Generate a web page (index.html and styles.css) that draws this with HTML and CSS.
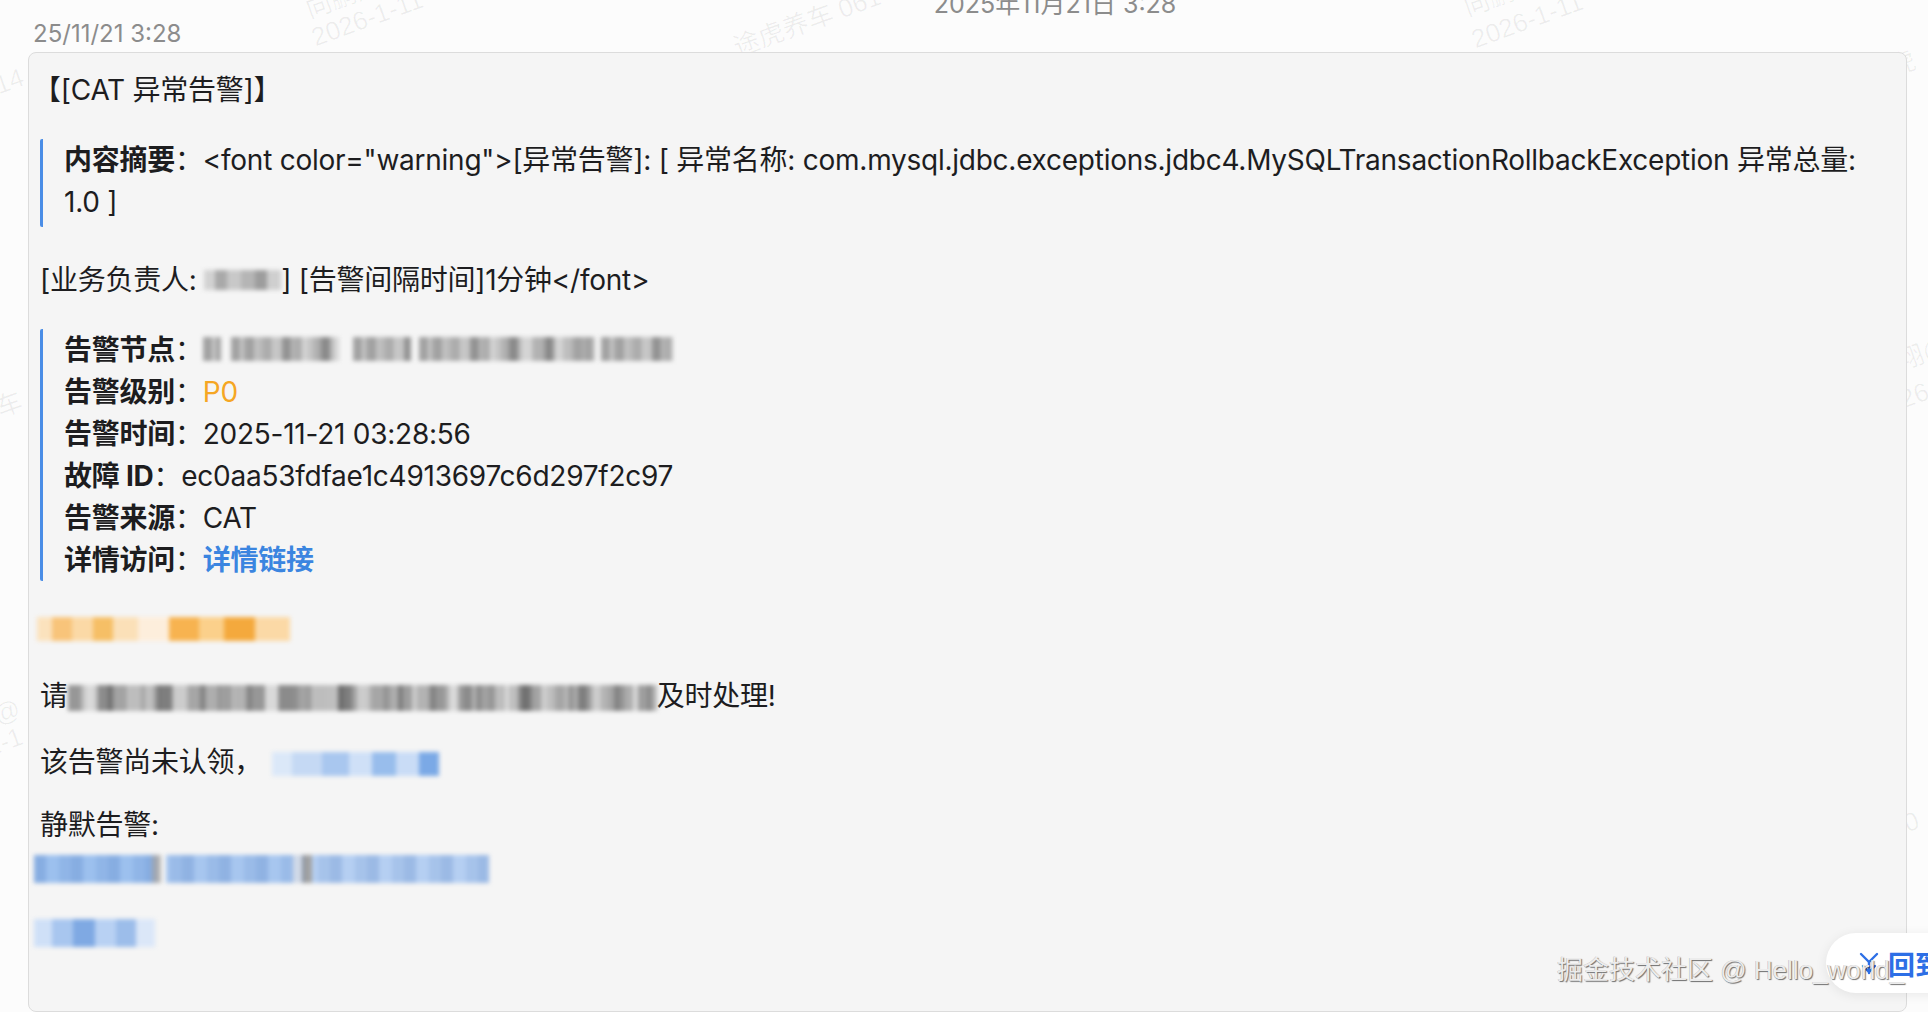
FILE: index.html
```html
<!DOCTYPE html>
<html lang="zh-CN">
<head>
<meta charset="utf-8">
<title>CAT 异常告警</title>
<link rel="stylesheet" href="styles.css">
</head>
<body>
<div class="page">
  <div class="wm-layer" aria-hidden="true">
    <span class="wm wm1">向鹏翔@途虎养车 0614</span>
    <span class="wm wm2">2026-1-11</span>
    <span class="wm wm3">途虎养车 0614</span>
    <span class="wm wm4">向鹏翔@途虎养车</span>
    <span class="wm wm5">2026-1-11</span>
    <span class="wm wm6">0614</span>
    <span class="wm wm7">养车</span>
    <span class="wm wm8">@</span>
    <span class="wm wm9">1-1</span>
    <span class="wm wm10">翔@</span>
    <span class="wm wm11">26</span>
    <span class="wm wm12">0</span>
    <span class="wm wm13">虎</span>
  </div>

  <div class="top-date">2025年11月21日 3:28</div>
  <div class="meta">25/11/21 3:28</div>

  <div class="card">
    <div class="line title"><span class="halt">【</span>[CAT 异常告警]<span class="halt">】</span></div>

    <div class="quote q1">
      <b>内容摘要</b>：&lt;font color="warning"&gt;[异常告警]: [ 异常名称: com.mysql.jdbc.exceptions.jdbc4.MySQLTransactionRollbackException 异常总量: 1.0 ]
    </div>

    <div class="line gap-32">[业务负责人: <span class="mz mz-owner"></span>] [告警间隔时间]1分钟&lt;/font&gt;</div>

    <div class="quote q2">
      <div class="line"><b>告警节点</b>：<span class="mz mz-node mz-n1"></span><span class="mz mz-node mz-n2"></span><span class="mz mz-node mz-n3"></span><span class="mz mz-node mz-n4"></span><span class="mz mz-node mz-n5"></span></div>
      <div class="line"><b>告警级别</b>：<span class="warn">P0</span></div>
      <div class="line"><b>告警时间</b>：2025-11-21 03:28:56</div>
      <div class="line"><b>故障 ID</b>：ec0aa53fdfae1c4913697c6d297f2c97</div>
      <div class="line"><b>告警来源</b>：CAT</div>
      <div class="line"><b>详情访问</b>：<a class="link" href="#">详情链接</a></div>
    </div>

    <div class="line gap-25"><span class="mz mz-orange"></span></div>

    <div class="line gap-27">请<span class="mz mz-gray-long"></span>及时处理!</div>

    <div class="line gap-24">该告警尚未认领，<span class="mz mz-blue-short"></span></div>

    <div class="gap-21">
      <div class="line">静默告警:</div>
      <div class="line"><span class="mz mz-blue-line"></span></div>
    </div>

    <div class="line gap-22"><span class="mz mz-blue-small"></span></div>
  </div>

  <div class="back-pill">
    <svg class="back-icon" width="22" height="24" viewBox="0 0 22 24" fill="none" stroke="#2d6fe6" stroke-width="2.4" stroke-linecap="round" stroke-linejoin="round">
      <path d="M3 3 L11 11 L19 3"/>
      <path d="M11 11 V22"/>
      <path d="M5 15 L11 21 L17 15"/>
    </svg>
    <span class="back-text">回到底部</span>
  </div>
  <div class="juejin">掘金技术社区 @ Hello_world_</div>
</div>
</body>
</html>
```

FILE: styles.css
```css
html, body {
  margin: 0;
  padding: 0;
  background: #fcfcfc;
}

body {
  width: 1928px;
  height: 1012px;
  overflow: hidden;
  font-family: Inter, "Noto Sans CJK SC", sans-serif;
  color: #1d1d1f;
}

.page {
  position: relative;
  width: 1928px;
  height: 1012px;
  overflow: hidden;
}

/* faint background watermark */
.wm-layer {
  position: absolute;
  inset: 0;
  z-index: 0;
  pointer-events: none;
}

.wm {
  position: absolute;
  font-family: "Liberation Sans", "Noto Sans CJK SC", sans-serif;
  font-size: 26px;
  color: rgba(0, 0, 0, 0.06);
  white-space: nowrap;
  transform: rotate(-20deg);
  transform-origin: left bottom;
}

.wm1 { left: 312px; top: -12px; }
.wm2 { left: 318px; top: 22px; }
.wm3 { left: 740px; top: 26px; }
.wm4 { left: 1470px; top: -14px; }
.wm5 { left: 1478px; top: 24px; }
.wm6 { left: -26px; top: 80px; }
.wm7 { left: -22px; top: 396px; }
.wm8 { left: 0px; top: 700px; }
.wm9 { left: -8px; top: 732px; }
.wm10 { left: 1904px; top: 340px; }
.wm11 { left: 1906px; top: 384px; }
.wm12 { left: 1910px; top: 808px; }
.wm13 { left: 1896px; top: 46px; }

.top-date {
  position: relative;
  z-index: 1;
  height: 26px;
  margin-top: -9px;
  padding-left: 182px;
  text-align: center;
  font-size: 25px;
  line-height: 26px;
  color: #8c8c8c;
}

.meta {
  position: relative;
  z-index: 1;
  margin: 4px 0 0 33px;
  font-size: 24px;
  line-height: 26px;
  color: #8c8c8c;
}

.card {
  position: relative;
  z-index: 1;
  box-sizing: border-box;
  width: 1879px;
  height: 960px;
  margin: 5px 0 0 28px;
  padding: 16px 20px 0 11px;
  background: #f5f5f5;
  border: 1px solid #dcdcdc;
  border-radius: 8px;
  font-size: 28px;
  line-height: 42px;
  letter-spacing: -0.25px;
}

.line {
  min-height: 42px;
}

.title {
  padding-left: 7px;
}

.halt {
  font-feature-settings: "halt" 1;
}

.quote {
  border-left: 3px solid #4a8de6;
  border-radius: 2px;
  padding-left: 21px;
}

.q1 {
  margin-top: 28px;
  padding-bottom: 4px;
}

.q2 {
  margin-top: 28px;
}

b {
  font-weight: 700;
}

.warn {
  color: #f5a623;
}

.link {
  color: #3b85e0;
  font-weight: 700;
  text-decoration: none;
}

.gap-32 { margin-top: 32px; }
.gap-25 { margin-top: 25px; }
.gap-27 { margin-top: 27px; }
.gap-24 { margin-top: 24px; }
.gap-22 { margin-top: 22px; }
.gap-21 { margin-top: 21px; }

/* mosaic (pixelated/blurred) redactions */
.mz {
  display: inline-block;
  vertical-align: middle;
  height: 22px;
  filter: blur(2px);
}

.mz-owner {
  width: 77px;
  height: 20px;
  margin-top: -4px;
  background:
    linear-gradient(90deg, #d2d2d2 0 14%, #a9a9a9 14% 30%, #c8c8c8 30% 48%, #b5b5b5 48% 66%, #9d9d9d 66% 82%, #cfcfcf 82% 100%);
}

.mz-node {
  height: 24px;
  margin-top: -6px;
  background:
    repeating-linear-gradient(90deg, rgba(0,0,0,0.18) 0 9px, rgba(0,0,0,0) 9px 20px, rgba(0,0,0,0.1) 20px 31px),
    repeating-linear-gradient(90deg, #c6c6c6 0 13px, #a4a4a4 13px 22px, #d4d4d4 22px 38px);
}
.mz-n1 { width: 18px; }
.mz-n2 { width: 108px; margin-left: 10px; }
.mz-n3 { width: 58px; margin-left: 14px; }
.mz-n4 { width: 176px; margin-left: 8px; }
.mz-n5 { width: 72px; margin-left: 6px; }

.mz-orange {
  width: 253px;
  height: 24px;
  margin-left: -3px;
  background:
    linear-gradient(90deg, #fbe2bd 0 6%, #f8c47a 6% 14%, #fbd9a6 14% 22%, #f6bf66 22% 30%, #fbe0b8 30% 40%, #fdeedc 40% 52%, #f7b350 52% 64%, #fbd08b 64% 74%, #f4a93d 74% 86%, #fbd9a6 86% 100%);
}

.mz-gray-long {
  width: 589px;
  height: 26px;
  background:
    repeating-linear-gradient(90deg, rgba(0,0,0,0.2) 0 13px, rgba(0,0,0,0) 13px 27px, rgba(0,0,0,0.12) 27px 40px, rgba(0,0,0,0.3) 40px 46px),
    repeating-linear-gradient(90deg, #bdbdbd 0 17px, #d9d9d9 17px 30px, #9e9e9e 30px 44px, #cccccc 44px 60px);
}

.mz-blue-short {
  width: 167px;
  height: 24px;
  margin-left: 10px;
  background:
    linear-gradient(90deg, #dbe8f8 0 12%, #c5d9f4 12% 30%, #a9c7ef 30% 46%, #cfe0f7 46% 60%, #98bdec 60% 74%, #c9dcf6 74% 88%, #7ba9e6 88% 100%);
}

.mz-blue-line {
  width: 455px;
  height: 28px;
  margin-left: -6px;
  background:
    repeating-linear-gradient(90deg, rgba(40,90,170,0.18) 0 12px, rgba(0,0,0,0) 12px 25px, rgba(40,90,170,0.1) 25px 37px),
    linear-gradient(90deg, #9cc0ee 0 26%, #b5b5b5 26% 28%, transparent 28% 29%, #a7c6ef 29% 57%, transparent 57% 59%, #a2a2a2 59% 61%, #b5cff2 61% 100%);
}

.mz-blue-small {
  width: 121px;
  height: 28px;
  margin-left: -6px;
  background:
    linear-gradient(90deg, #cfe0f7 0 15%, #a8c6ef 15% 32%, #7fa9e3 32% 50%, #b8d1f3 50% 68%, #9cbdea 68% 84%, #dbe7f8 84% 100%);
}

/* floating "back" pill */
.back-pill {
  position: absolute;
  z-index: 2;
  left: 1826px;
  top: 933px;
  width: 140px;
  height: 60px;
  box-sizing: border-box;
  padding-left: 32px;
  display: flex;
  align-items: center;
  gap: 8px;
  background: #ffffff;
  border-radius: 30px 0 0 30px;
  box-shadow: 0 2px 12px rgba(0, 0, 0, 0.08);
}

.back-icon {
  flex: none;
}

.back-text {
  font-size: 27px;
  font-weight: 700;
  color: #2d6fe6;
  white-space: nowrap;
}

.juejin {
  position: absolute;
  z-index: 3;
  left: 1557px;
  top: 953px;
  font-family: "Liberation Sans", "Noto Sans CJK SC", sans-serif;
  font-size: 26px;
  line-height: 34px;
  white-space: nowrap;
  color: #ececec;
  text-shadow: 1px 1px 1px rgba(0, 0, 0, 0.55), -0.5px -0.5px 0 rgba(0, 0, 0, 0.25);
}
```
